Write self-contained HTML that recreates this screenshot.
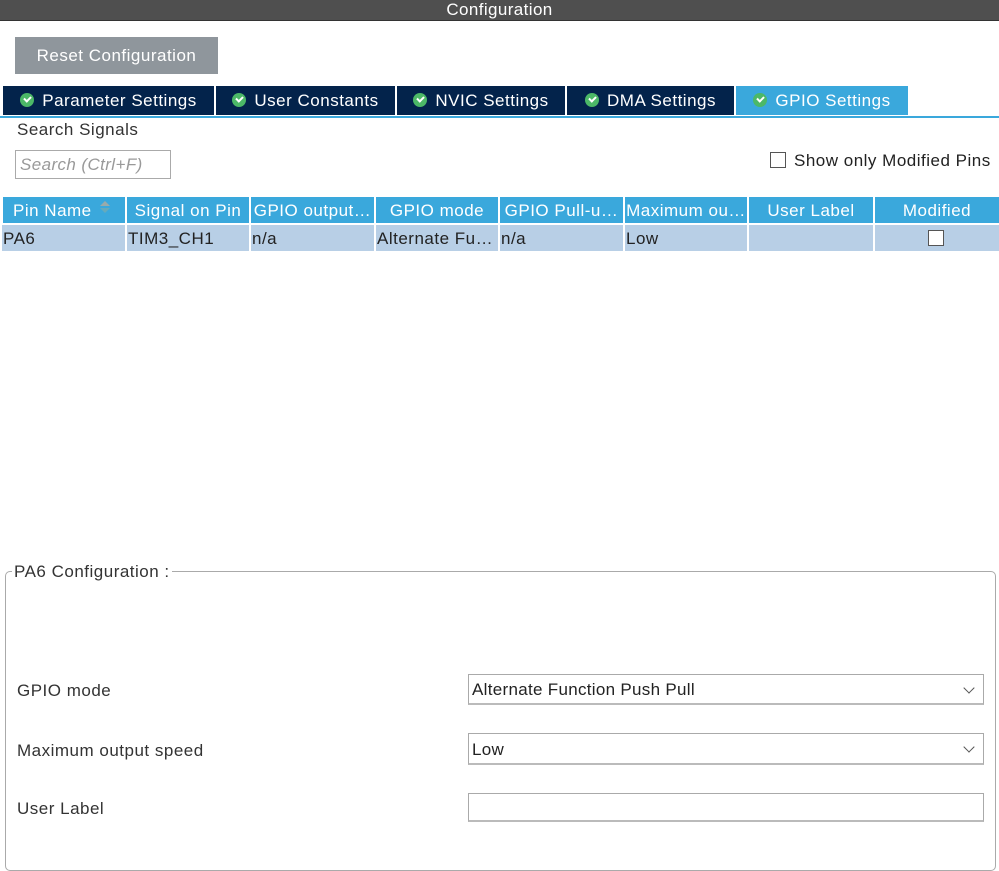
<!DOCTYPE html>
<html><head><meta charset="utf-8"><style>
*{box-sizing:border-box;margin:0;padding:0}
body{width:999px;height:852px;background:#fff;font-family:"Liberation Sans",Arial,sans-serif;position:relative;overflow:hidden;color:#222}
.a{position:absolute}
.title{left:0;top:0;width:999px;height:21px;background:#4f4f4f;color:#fff;font-size:17px;letter-spacing:0.4px;text-align:center;line-height:19px;border-bottom:1px solid #333}
.btn{left:15px;top:37px;width:203px;height:37px;background:#8f969c;color:#fff;font-size:17px;letter-spacing:0.5px;text-align:center;line-height:37px}
.tab{top:86px;height:29px;background:#03234b;color:#fff;font-size:17px;letter-spacing:0.5px;line-height:29px;text-align:center;white-space:nowrap}
.tab.act{background:#3aa8dc}
.ic{display:inline-block;width:14px;height:14px;border-radius:50%;background:#4cb867;vertical-align:-1px;margin-right:8px;position:relative}
.ic:after{content:"";position:absolute;left:4px;top:3px;width:5px;height:3px;border-left:2px solid #fff;border-bottom:2px solid #fff;transform:rotate(-45deg)}
.th{top:197px;height:26px;background:#3aa8dc;color:#fff;font-size:17px;letter-spacing:0.5px;line-height:27px;text-align:center;white-space:nowrap;overflow:hidden}
.td{top:225px;height:26px;background:#b8cfe6;font-size:17px;letter-spacing:0.5px;line-height:27px;padding-left:1px;white-space:nowrap}
.lbl{font-size:17px;letter-spacing:0.5px;color:#333;white-space:nowrap}
.sel{left:468px;width:516px;border:1px solid #aaa;border-bottom:2px solid #bbb;font-size:17px;letter-spacing:0.3px;padding-left:3px;color:#222}
.chev{position:absolute;right:10px;top:9px;width:8px;height:8px;border-right:1px solid #555;border-bottom:1px solid #555;transform:rotate(45deg)}
</style></head><body>
<div class="a title">Configuration</div>
<div class="a btn">Reset Configuration</div>
<div class="a tab" style="left:3px;width:211px"><span class="ic"></span>Parameter Settings</div>
<div class="a tab" style="left:216px;width:179px"><span class="ic"></span>User Constants</div>
<div class="a tab" style="left:397px;width:168px"><span class="ic"></span>NVIC Settings</div>
<div class="a tab" style="left:567px;width:167px"><span class="ic"></span>DMA Settings</div>
<div class="a tab act" style="left:736px;width:172px"><span class="ic"></span>GPIO Settings</div>
<div class="a" style="left:0;top:116px;width:999px;height:2px;background:#3aa8dc"></div>
<div class="a lbl" style="left:17px;top:120px">Search Signals</div>
<div class="a" style="left:15px;top:150px;width:156px;height:29px;border:1px solid #aaa;font-size:17px;letter-spacing:0.4px;font-style:italic;color:#999;line-height:27px;padding-left:4px">Search (Ctrl+F)</div>
<div class="a" style="left:770px;top:152px;width:16px;height:16px;border:1px solid #555"></div>
<div class="a lbl" style="left:794px;top:151px;color:#222">Show only Modified Pins</div>
<div class="a th" style="left:3px;width:122px;text-align:left;padding-left:10px">Pin Name</div>
<div class="a" style="left:100px;top:201px;width:0;height:0;border-left:5px solid transparent;border-right:5px solid transparent;border-bottom:5px solid #9aa"></div>
<div class="a" style="left:100px;top:208px;width:0;height:0;border-left:5px solid transparent;border-right:5px solid transparent;border-top:5px solid #6ab"></div>
<div class="a th" style="left:127px;width:122px">Signal on Pin</div>
<div class="a th" style="left:251px;width:123px">GPIO output…</div>
<div class="a th" style="left:376px;width:122px">GPIO mode</div>
<div class="a th" style="left:500px;width:123px">GPIO Pull-u…</div>
<div class="a th" style="left:625px;width:122px">Maximum ou…</div>
<div class="a th" style="left:749px;width:124px">User Label</div>
<div class="a th" style="left:875px;width:124px">Modified</div>
<div class="a td" style="left:2px;width:123px">PA6</div>
<div class="a td" style="left:127px;width:122px">TIM3_CH1</div>
<div class="a td" style="left:251px;width:123px">n/a</div>
<div class="a td" style="left:376px;width:122px">Alternate Fu…</div>
<div class="a td" style="left:500px;width:123px">n/a</div>
<div class="a td" style="left:625px;width:122px">Low</div>
<div class="a td" style="left:749px;width:124px"></div>
<div class="a td" style="left:875px;width:124px"><div class="a" style="left:53px;top:5px;width:16px;height:16px;border:1px solid #555;background:#fff"></div></div>
<div class="a" style="left:5px;top:571px;width:991px;height:300px;border:1px solid #aaa;border-radius:5px"></div>
<div class="a lbl" style="left:12px;top:562px;background:#fff;padding:0 2px">PA6 Configuration :</div>
<div class="a lbl" style="left:17px;top:681px">GPIO mode</div>
<div class="a lbl" style="left:17px;top:741px">Maximum output speed</div>
<div class="a lbl" style="left:17px;top:799px">User Label</div>
<div class="a sel" style="top:674px;height:31px;line-height:30px">Alternate Function Push Pull<div class="chev"></div></div>
<div class="a sel" style="top:733px;height:32px;line-height:31px">Low<div class="chev"></div></div>
<div class="a sel" style="top:793px;height:29px"></div>
</body></html>
